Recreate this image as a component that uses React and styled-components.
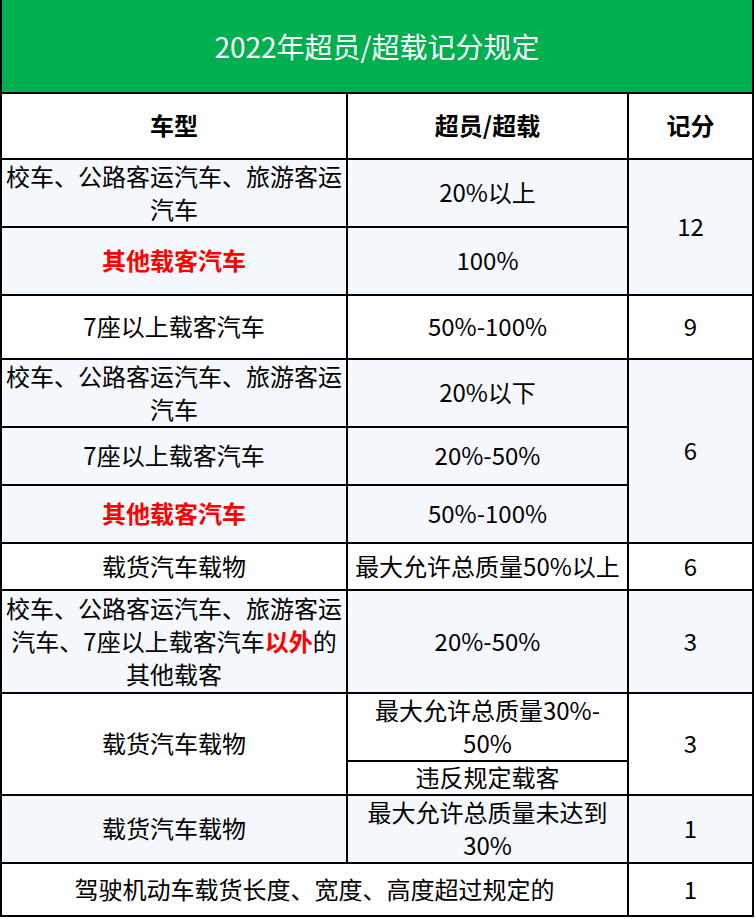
import React from "react";
import styled, { createGlobalStyle } from "styled-components";

const Global = createGlobalStyle`
  html, body { margin: 0; padding: 0; background: #ffffff; }
  body { font-family: "Noto Sans CJK SC", "Noto Sans", sans-serif; }
`;

const Sheet = styled.div`
  display: grid;
  grid-template-columns: 344px 279px 123px;
  grid-template-rows: 92px 64px 66px 66px 62px 66px 56px 56px 45px 101px 66px 32px 66px 51px;
  gap: 2px;
  padding: 0 2px 2px 2px;
  width: 754px;
  box-sizing: border-box;
  background: #000000;
`;

const Title = styled.div`
  grid-column: 1 / -1;
  background: #00b050;
  color: #ffffff;
  font-size: 28px;
  display: flex;
  align-items: center;
  justify-content: center;
`;

const Box = styled.div`
  grid-row: span ${(p) => p.$rows || 1};
  grid-column: span ${(p) => p.$cols || 1};
  background: ${(p) => (p.$blue ? "#f5f8fd" : "#ffffff")};
  color: #000000;
  font-size: 24px;
  line-height: 33px;
  font-weight: ${(p) => (p.$head ? 700 : 400)};
  display: flex;
  align-items: center;
  justify-content: center;
  text-align: center;
  white-space: nowrap;
  padding-bottom: 3px;
`;

const Inner = styled.div``;

const Red = styled.span`
  color: #ff0000;
  font-weight: 700;
`;

function Cell({ children, ...rest }) {
  return (
    <Box {...rest}>
      <Inner>{children}</Inner>
    </Box>
  );
}

export default function App() {
  return (
    <>
      <Global />
      <Sheet>
        <Title>2022年超员/超载记分规定</Title>

        <Cell $head>车型</Cell>
        <Cell $head>超员/超载</Cell>
        <Cell $head>记分</Cell>

        <Cell $blue>校车、公路客运汽车、旅游客运<br />汽车</Cell>
        <Cell $blue>20%以上</Cell>
        <Cell $blue $rows={2}>12</Cell>
        <Cell $blue><Red>其他载客汽车</Red></Cell>
        <Cell $blue>100%</Cell>

        <Cell>7座以上载客汽车</Cell>
        <Cell>50%-100%</Cell>
        <Cell>9</Cell>

        <Cell $blue>校车、公路客运汽车、旅游客运<br />汽车</Cell>
        <Cell $blue>20%以下</Cell>
        <Cell $blue $rows={3}>6</Cell>
        <Cell $blue>7座以上载客汽车</Cell>
        <Cell $blue>20%-50%</Cell>
        <Cell $blue><Red>其他载客汽车</Red></Cell>
        <Cell $blue>50%-100%</Cell>

        <Cell>载货汽车载物</Cell>
        <Cell>最大允许总质量50%以上</Cell>
        <Cell>6</Cell>

        <Cell $blue>
          校车、公路客运汽车、旅游客运<br />汽车、7座以上载客汽车<Red>以外</Red>的<br />其他载客
        </Cell>
        <Cell $blue>20%-50%</Cell>
        <Cell $blue>3</Cell>

        <Cell $rows={2}>载货汽车载物</Cell>
        <Cell>最大允许总质量30%-<br />50%</Cell>
        <Cell $rows={2}>3</Cell>
        <Cell>违反规定载客</Cell>

        <Cell $blue>载货汽车载物</Cell>
        <Cell $blue>最大允许总质量未达到<br />30%</Cell>
        <Cell $blue>1</Cell>

        <Cell $cols={2}>驾驶机动车载货长度、宽度、高度超过规定的</Cell>
        <Cell>1</Cell>
      </Sheet>
    </>
  );
}
